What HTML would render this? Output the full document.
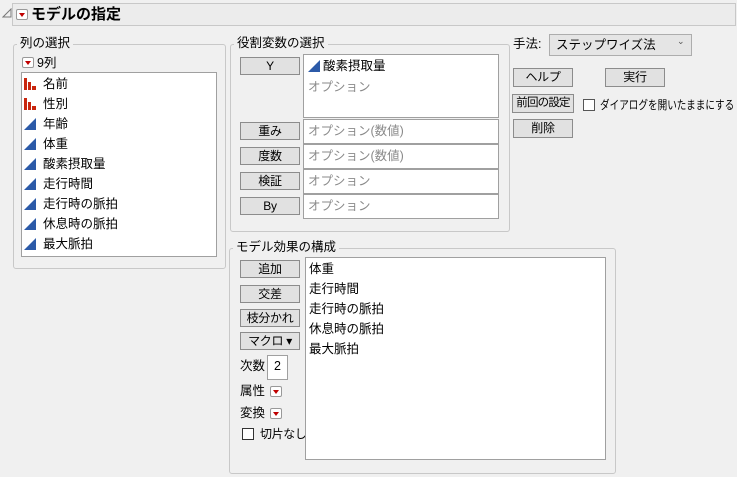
<!DOCTYPE html><html><head><meta charset="utf-8"><style>
body{margin:0;width:737px;height:477px;background:#f0f0f0;font-family:"Liberation Sans","Noto Sans CJK JP",sans-serif;font-size:12.5px;color:#000;position:relative;overflow:hidden}
.a{position:absolute;white-space:nowrap}
.fr{position:absolute;border:1px solid #c8c8c8;border-radius:3px}
.lg{position:absolute;background:#f0f0f0;padding:0 3px;font-size:12.5px;line-height:14px;white-space:nowrap}
.btn{position:absolute;background:#e1e1e1;border:1px solid #8c8c8c;box-sizing:border-box;text-align:center;font-size:12px;line-height:16px;white-space:nowrap;overflow:hidden;letter-spacing:-0.3px}
.box{position:absolute;background:#fff;border:1px solid #a0a0a0;box-sizing:border-box}
.ph{color:#8a8a8a}
.rb{position:absolute;width:12px;height:11px;background:#fff;border:1px solid #999;box-sizing:border-box;border-radius:2px}
.rb:after{content:"";position:absolute;left:2px;top:3px;border-left:3px solid transparent;border-right:3px solid transparent;border-top:4px solid #c00000}
.cb{position:absolute;width:12px;height:12px;background:#fff;border:1px solid #333;box-sizing:border-box}
.it{position:absolute;line-height:16px;white-space:nowrap}
</style></head><body>
<svg class="a" style="left:2px;top:8px" width="10" height="10"><path d="M1 9 L9 9 L9 1 Z" fill="none" stroke="#777"/></svg>
<div class="a" style="left:12px;top:3px;width:724px;height:23px;background:#ececec;border:1px solid #c8c8c8;box-sizing:border-box"></div>
<div class="rb" style="left:16px;top:9px"></div>
<div class="a" style="left:31px;top:5px;font-weight:bold;font-size:15px;line-height:20px">モデルの指定</div>

<div class="fr" style="left:13px;top:44px;width:211px;height:223px"></div>
<div class="lg" style="left:17px;top:36px">列の選択</div>
<div class="rb" style="left:22px;top:57px"></div>
<div class="a" style="left:37px;top:55px;line-height:16px">9列</div>
<div class="box" style="left:21px;top:72px;width:196px;height:185px"></div>

<div class="fr" style="left:230px;top:44px;width:278px;height:186px"></div>
<div class="lg" style="left:234px;top:36px">役割変数の選択</div>
<div class="btn" style="left:240px;top:57px;width:60px;height:18px">Y</div>
<div class="box" style="left:303px;top:54px;width:196px;height:64px"></div>
<svg class="a" style="left:308px;top:60px" width="12" height="12"><path d="M0 12 L12 12 L12 0 Z" fill="#2c5aa8"/></svg>
<div class="it" style="left:323px;top:58px">酸素摂取量</div>
<div class="it ph" style="left:308px;top:79px">オプション</div>
<div class="btn" style="left:240px;top:122px;width:60px;height:18px">重み</div>
<div class="box" style="left:303px;top:119px;width:196px;height:25px"></div>
<div class="it ph" style="left:308px;top:123px">オプション(数値)</div>
<div class="btn" style="left:240px;top:147px;width:60px;height:18px">度数</div>
<div class="box" style="left:303px;top:144px;width:196px;height:25px"></div>
<div class="it ph" style="left:308px;top:148px">オプション(数値)</div>
<div class="btn" style="left:240px;top:172px;width:60px;height:18px">検証</div>
<div class="box" style="left:303px;top:169px;width:196px;height:25px"></div>
<div class="it ph" style="left:308px;top:173px">オプション</div>
<div class="btn" style="left:240px;top:197px;width:60px;height:18px">By</div>
<div class="box" style="left:303px;top:194px;width:196px;height:25px"></div>
<div class="it ph" style="left:308px;top:198px">オプション</div>

<div class="a" style="left:513px;top:36px;line-height:16px">手法:</div>
<div class="a" style="left:549px;top:34px;width:143px;height:22px;background:#e5e5e5;border:1px solid #adadad;box-sizing:border-box"></div>
<div class="it" style="left:556px;top:37px">ステップワイズ法</div>
<div class="a" style="left:677px;top:36px;font-size:9px;color:#555">⌄</div>
<div class="btn" style="left:513px;top:68px;width:60px;height:19px">ヘルプ</div>
<div class="btn" style="left:605px;top:68px;width:60px;height:19px">実行</div>
<div class="btn" style="left:512px;top:94px;width:62px;height:19px;letter-spacing:-0.8px;font-size:11.5px">前回の設定</div>
<div class="cb" style="left:583px;top:99px;border-color:#555"></div>
<div class="it" style="left:600px;top:97px;font-size:12px;transform:scaleX(0.8);transform-origin:0 0">ダイアログを開いたままにする</div>
<div class="btn" style="left:513px;top:119px;width:60px;height:19px">削除</div>

<div class="fr" style="left:229px;top:248px;width:385px;height:224px"></div>
<div class="lg" style="left:233px;top:240px">モデル効果の構成</div>
<div class="btn" style="left:240px;top:260px;width:60px;height:18px">追加</div>
<div class="btn" style="left:240px;top:285px;width:60px;height:18px">交差</div>
<div class="btn" style="left:240px;top:309px;width:60px;height:18px">枝分かれ</div>
<div class="btn" style="left:240px;top:332px;width:60px;height:18px">マクロ ▾</div>
<div class="it" style="left:240px;top:358px">次数</div>
<div class="box" style="left:267px;top:355px;width:21px;height:25px"></div>
<div class="it" style="left:274px;top:358px">2</div>
<div class="it" style="left:240px;top:383px">属性</div><div class="rb" style="left:270px;top:386px"></div>
<div class="it" style="left:240px;top:405px">変換</div><div class="rb" style="left:270px;top:408px"></div>
<div class="cb" style="left:242px;top:428px"></div>
<div class="it" style="left:260px;top:426px;font-size:12px;letter-spacing:-0.4px">切片なし</div>
<div class="box" style="left:305px;top:257px;width:301px;height:203px"></div>
<div class="it" style="left:309px;top:261px">体重</div>
<div class="it" style="left:309px;top:281px">走行時間</div>
<div class="it" style="left:309px;top:301px">走行時の脈拍</div>
<div class="it" style="left:309px;top:321px">休息時の脈拍</div>
<div class="it" style="left:309px;top:341px">最大脈拍</div>

<svg class="a" style="left:24px;top:78px" width="14" height="180">
<g fill="#c8260e"><rect x="0" y="0" width="3" height="12"/><rect x="4" y="4" width="3" height="8"/><rect x="8" y="8" width="4" height="4"/>
<rect x="0" y="20" width="3" height="12"/><rect x="4" y="24" width="3" height="8"/><rect x="8" y="28" width="4" height="4"/></g>
<g fill="#2c5aa8"><path d="M0 52 L12 52 L12 40 Z"/><path d="M0 72 L12 72 L12 60 Z"/><path d="M0 92 L12 92 L12 80 Z"/><path d="M0 112 L12 112 L12 100 Z"/><path d="M0 132 L12 132 L12 120 Z"/><path d="M0 152 L12 152 L12 140 Z"/><path d="M0 172 L12 172 L12 160 Z"/></g></svg>
<div class="it" style="left:43px;top:76px">名前</div>
<div class="it" style="left:43px;top:96px">性別</div>
<div class="it" style="left:43px;top:116px">年齢</div>
<div class="it" style="left:43px;top:136px">体重</div>
<div class="it" style="left:43px;top:156px">酸素摂取量</div>
<div class="it" style="left:43px;top:176px">走行時間</div>
<div class="it" style="left:43px;top:196px">走行時の脈拍</div>
<div class="it" style="left:43px;top:216px">休息時の脈拍</div>
<div class="it" style="left:43px;top:236px">最大脈拍</div>
</body></html>
